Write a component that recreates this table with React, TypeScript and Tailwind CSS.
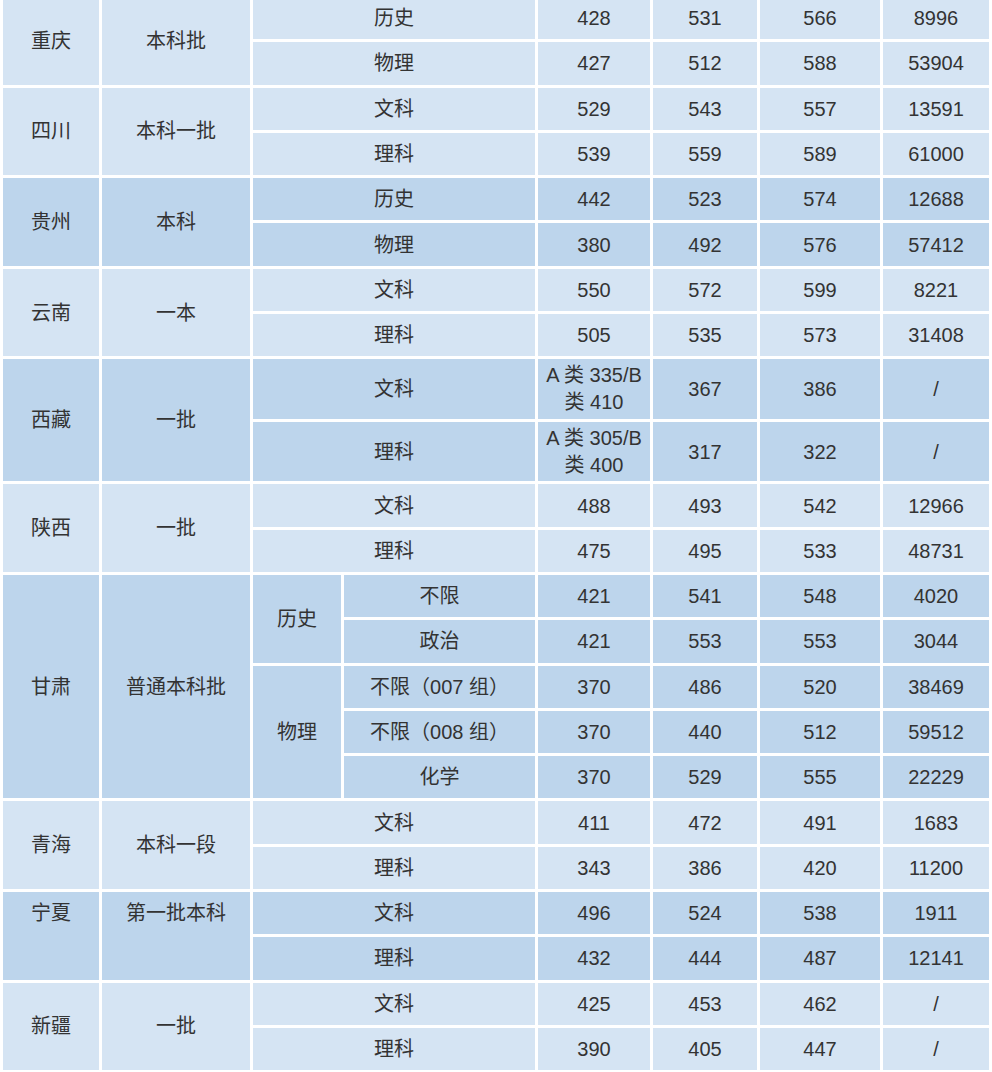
import React from "react";

type Row = [string, React.ReactNode, string, string, string];
type Group = { prov: string; batch: string; dark?: boolean; tall?: boolean; topAlign?: boolean; rows: Row[] };

const LIGHT = "bg-[#d5e4f3]";
const DARK = "bg-[#bdd5ec]";

const before: Group[] = [
  { prov: "重庆", batch: "本科批", rows: [["历史", "428", "531", "566", "8996"], ["物理", "427", "512", "588", "53904"]] },
  { prov: "四川", batch: "本科一批", rows: [["文科", "529", "543", "557", "13591"], ["理科", "539", "559", "589", "61000"]] },
  { prov: "贵州", batch: "本科", dark: true, rows: [["历史", "442", "523", "574", "12688"], ["物理", "380", "492", "576", "57412"]] },
  { prov: "云南", batch: "一本", rows: [["文科", "550", "572", "599", "8221"], ["理科", "505", "535", "573", "31408"]] },
  {
    prov: "西藏",
    batch: "一批",
    dark: true,
    tall: true,
    rows: [
      ["文科", <>A 类 335/B<br />类 410</>, "367", "386", "/"],
      ["理科", <>A 类 305/B<br />类 400</>, "317", "322", "/"],
    ],
  },
  { prov: "陕西", batch: "一批", rows: [["文科", "488", "493", "542", "12966"], ["理科", "475", "495", "533", "48731"]] },
];

const after: Group[] = [
  { prov: "青海", batch: "本科一段", rows: [["文科", "411", "472", "491", "1683"], ["理科", "343", "386", "420", "11200"]] },
  { prov: "宁夏", batch: "第一批本科", dark: true, topAlign: true, rows: [["文科", "496", "524", "538", "1911"], ["理科", "432", "444", "487", "12141"]] },
  { prov: "新疆", batch: "一批", rows: [["文科", "425", "453", "462", "/"], ["理科", "390", "405", "447", "/"]] },
];

const gansu: [string | null, string, string, string, string, string][] = [
  ["历史", "不限", "421", "541", "548", "4020"],
  [null, "政治", "421", "553", "553", "3044"],
  ["物理", "不限（007 组）", "370", "486", "520", "38469"],
  [null, "不限（008 组）", "370", "440", "512", "59512"],
  [null, "化学", "370", "529", "555", "22229"],
];

const td = "p-0 text-center align-middle";

function GroupRows({ g }: { g: Group }) {
  const bg = g.dark ? DARK : LIGHT;
  const h = g.tall ? "h-[59.5px]" : "h-[42.3px]";
  return (
    <>
      {g.rows.map((r, i) => (
        <tr key={i}>
          {i === 0 && (
            <>
              <td rowSpan={g.rows.length} className={`${td} ${bg} ${g.topAlign ? "align-top" : ""}`}>
                {g.topAlign ? <div className="flex h-[42.3px] items-center justify-center">{g.prov}</div> : g.prov}
              </td>
              <td rowSpan={g.rows.length} className={`${td} ${bg} ${g.topAlign ? "align-top" : ""}`}>
                {g.topAlign ? <div className="flex h-[42.3px] items-center justify-center">{g.batch}</div> : g.batch}
              </td>
            </>
          )}
          <td colSpan={2} className={`${td} ${bg} ${h}`}>{r[0]}</td>
          <td className={`${td} ${bg} ${g.tall ? "leading-[27px]" : ""}`}>{r[1]}</td>
          <td className={`${td} ${bg}`}>{r[2]}</td>
          <td className={`${td} ${bg}`}>{r[3]}</td>
          <td className={`${td} ${bg}`}>{r[4]}</td>
        </tr>
      ))}
    </>
  );
}

export default function App() {
  return (
    <div className="w-[992px] h-[1072px] overflow-hidden bg-white">
      <table
        className="-mt-[6px] w-[992px] table-fixed border-separate border-spacing-[3px] text-[20px] leading-[24px] text-[#333333]"
        style={{ fontFamily: '"Liberation Sans", "Noto Sans CJK SC", sans-serif' }}
      >
        <colgroup>
          <col className="w-[96px]" />
          <col className="w-[148px]" />
          <col className="w-[88px]" />
          <col className="w-[191px]" />
          <col className="w-[112px]" />
          <col className="w-[104px]" />
          <col className="w-[120px]" />
          <col className="w-[106px]" />
        </colgroup>
        <tbody>
          {before.map((g) => (
            <GroupRows key={g.prov} g={g} />
          ))}
          {gansu.map((r, i) => (
            <tr key={`gs${i}`}>
              {i === 0 && (
                <>
                  <td rowSpan={5} className={`${td} ${DARK}`}>甘肃</td>
                  <td rowSpan={5} className={`${td} ${DARK}`}>普通本科批</td>
                </>
              )}
              {r[0] && (
                <td rowSpan={r[0] === "历史" ? 2 : 3} className={`${td} ${DARK}`}>
                  {r[0]}
                </td>
              )}
              <td className={`${td} ${DARK} h-[42.3px]`}>{r[1]}</td>
              <td className={`${td} ${DARK}`}>{r[2]}</td>
              <td className={`${td} ${DARK}`}>{r[3]}</td>
              <td className={`${td} ${DARK}`}>{r[4]}</td>
              <td className={`${td} ${DARK}`}>{r[5]}</td>
            </tr>
          ))}
          {after.map((g) => (
            <GroupRows key={g.prov} g={g} />
          ))}
        </tbody>
      </table>
    </div>
  );
}
